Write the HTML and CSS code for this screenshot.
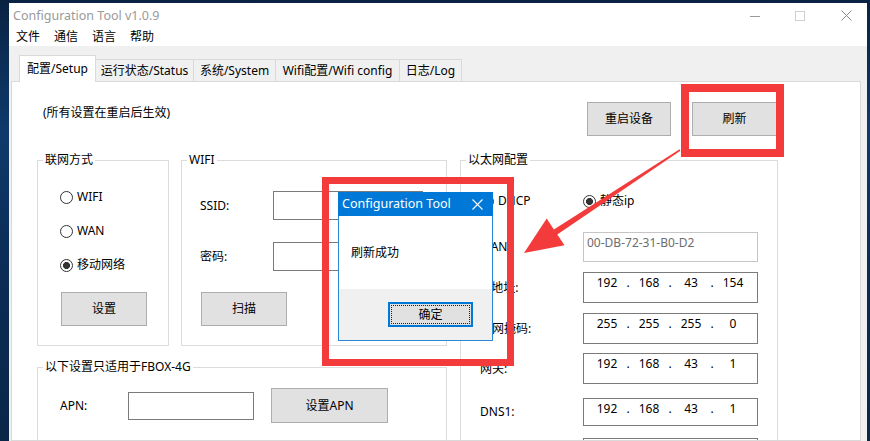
FILE: index.html
```html
<!DOCTYPE html>
<html lang="zh-CN">
<head>
<meta charset="utf-8">
<title>Configuration Tool v1.0.9</title>
<link rel="stylesheet" href="styles.css">
</head>
<body>
<div class="desktop">
  <div class="window">
    <div class="titlebar">
      <span class="title">Configuration Tool v1.0.9</span>
      <div class="controls">
        <span class="ctl ctl-min"><svg width="10" height="10" viewBox="0 0 10 10"><path d="M0 5.5H10" stroke="#9a9a9a" stroke-width="1"/></svg></span>
        <span class="ctl ctl-max"><svg width="10" height="10" viewBox="0 0 10 10"><rect x="0.5" y="0.5" width="9" height="9" fill="none" stroke="#d0d0d0" stroke-width="1"/></svg></span>
        <span class="ctl ctl-close"><svg width="11" height="11" viewBox="0 0 11 11"><path d="M0.5 0.5L10.5 10.5M10.5 0.5L0.5 10.5" stroke="#8a8a8a" stroke-width="1"/></svg></span>
      </div>
    </div>
    <div class="menubar">
      <span class="menu-item">文件</span>
      <span class="menu-item">通信</span>
      <span class="menu-item">语言</span>
      <span class="menu-item">帮助</span>
    </div>
    <div class="client">
      <div class="tabs">
        <div class="tab tab-active tab-setup">配置/Setup</div>
        <div class="tab tab-status">运行状态/Status</div>
        <div class="tab tab-system">系统/System</div>
        <div class="tab tab-wifi">Wifi配置/Wifi config</div>
        <div class="tab tab-log">日志/Log</div>
      </div>
      <div class="tab-panel">
        <div class="panel-header">
          <p class="note">(所有设置在重启后生效)</p>
          <div class="header-actions">
            <button class="btn btn-restart">重启设备</button>
            <button class="btn btn-refresh">刷新</button>
          </div>
        </div>
        <div class="panel-body">
          <div class="left-col">
            <div class="group-row">
              <fieldset class="group group-net">
                <legend>联网方式</legend>
                <div class="group-inner net-inner">
                  <div class="radio"><span class="radio-dot"></span><span>WIFI</span></div>
                  <div class="radio"><span class="radio-dot"></span><span>WAN</span></div>
                  <div class="radio"><span class="radio-dot checked"></span><span>移动网络</span></div>
                  <button class="btn btn-set">设置</button>
                </div>
              </fieldset>
              <fieldset class="group group-wifi">
                <legend>WIFI</legend>
                <div class="group-inner wifi-inner">
                  <div class="form-row wifi-row">
                    <span class="wifi-label">SSID:</span>
                    <span class="textbox wifi-box"></span>
                  </div>
                  <div class="form-row wifi-row wifi-row-pass">
                    <span class="wifi-label">密码:</span>
                    <span class="textbox wifi-box"></span>
                  </div>
                  <button class="btn btn-scan">扫描</button>
                </div>
              </fieldset>
            </div>
            <fieldset class="group group-fbox">
              <legend>以下设置只适用于FBOX-4G</legend>
              <div class="group-inner fbox-inner">
                <div class="form-row apn-row">
                  <span class="apn-label">APN:</span>
                  <span class="textbox apn-box"></span>
                  <button class="btn btn-apn">设置APN</button>
                </div>
              </div>
            </fieldset>
          </div>
          <fieldset class="group group-eth">
            <legend>以太网配置</legend>
            <div class="group-inner eth-inner">
              <div class="eth-radios">
                <div class="radio radio-dhcp"><span class="radio-dot"></span><span>DHCP</span></div>
                <div class="radio"><span class="radio-dot checked"></span><span>静态ip</span></div>
              </div>
              <div class="eth-row row-mac">
                <span class="eth-label">WAN:</span>
                <span class="textbox mac-box">00-DB-72-31-B0-D2</span>
              </div>
              <div class="eth-row row-ip">
                <span class="eth-label">IP地址:</span>
                <span class="textbox ip-box"><span class="seg">192</span><span class="dot">.</span><span class="seg">168</span><span class="dot">.</span><span class="seg">43</span><span class="dot">.</span><span class="seg">154</span></span>
              </div>
              <div class="eth-row row-mask">
                <span class="eth-label">子网掩码:</span>
                <span class="textbox ip-box"><span class="seg">255</span><span class="dot">.</span><span class="seg">255</span><span class="dot">.</span><span class="seg">255</span><span class="dot">.</span><span class="seg">0</span></span>
              </div>
              <div class="eth-row row-gw">
                <span class="eth-label">网关:</span>
                <span class="textbox ip-box"><span class="seg">192</span><span class="dot">.</span><span class="seg">168</span><span class="dot">.</span><span class="seg">43</span><span class="dot">.</span><span class="seg">1</span></span>
              </div>
              <div class="eth-row row-dns1">
                <span class="eth-label">DNS1:</span>
                <span class="textbox ip-box"><span class="seg">192</span><span class="dot">.</span><span class="seg">168</span><span class="dot">.</span><span class="seg">43</span><span class="dot">.</span><span class="seg">1</span></span>
              </div>
              <div class="eth-row row-dns2">
                <span class="eth-label"></span>
                <span class="textbox ip-box"></span>
              </div>
            </div>
          </fieldset>
        </div>
      </div>
    </div>
  </div>
</div>

<div class="dialog">
  <div class="dialog-title">
    <span>Configuration Tool</span>
    <svg class="dialog-close" width="11" height="11" viewBox="0 0 11 11"><path d="M0.5 0.5L10.5 10.5M10.5 0.5L0.5 10.5" stroke="#fff" stroke-width="1.1"/></svg>
  </div>
  <div class="dialog-body">刷新成功</div>
  <div class="dialog-footer">
    <button class="btn btn-ok">确定</button>
  </div>
</div>

<svg class="annotations" width="870" height="441" viewBox="0 0 870 441">
  <rect x="325.5" y="180.5" width="185" height="182" fill="none" stroke="#f33b3b" stroke-width="7"/>
  <rect x="685" y="88" width="95" height="65" fill="none" stroke="#f33b3b" stroke-width="8"/>
  <polygon points="524,253 546.7,218.6 553.9,229.4 679.6,149.3 680.4,150.7 557.3,234.4 564.5,245.2" fill="#f33b3b"/>
</svg>
</body>
</html>
```

FILE: styles.css
```css
* { box-sizing: border-box; }
html, body { margin: 0; padding: 0; }
body {
  width: 870px;
  height: 441px;
  overflow: hidden;
  position: relative;
  background: linear-gradient(180deg, #0a2343 0%, #0e3a6b 30%, #0b2c55 60%, #0a2748 100%);
  font-family: "Noto Sans", "Noto Sans CJK SC", sans-serif;
  font-size: 12px;
  line-height: 16px;
  color: #000;
}
.desktop { padding: 3px 3px 0 9px; height: 441px; }
.window {
  background: #f0f0f0;
  height: 438px;
  overflow: hidden;
  display: flex;
  flex-direction: column;
}
.titlebar { height: 25px; background: #fff; display: flex; align-items: center; flex: none; }
.title { padding-left: 4px; color: #9a9a9a; font-size: 12.5px; }
.controls { margin-left: auto; display: flex; height: 100%; }
.ctl { display: flex; align-items: center; justify-content: center; height: 100%; }
.ctl svg { display: block; }
.ctl-min { width: 40px; }
.ctl-max { width: 50px; }
.ctl-close { width: 42px; }

.menubar { height: 18px; background: #fff; display: flex; align-items: center; flex: none; }
.menu-item { padding: 0 7px; }

.client { padding: 9px 6px 0 2px; flex: 1; display: flex; flex-direction: column; min-height: 0; }
.tabs { display: flex; align-items: flex-end; height: 26px; padding-left: 8px; flex: none; }
.tab {
  height: 22px;
  border: 1px solid #d9d9d9;
  border-bottom: none;
  background: #f0f0f0;
  text-align: center;
  line-height: 21px;
  white-space: nowrap;
  margin-left: -1px;
}
.tab-active {
  height: 27px;
  background: #fff;
  margin-bottom: -1px;
  margin-left: 0;
  position: relative;
  z-index: 1;
  padding-top: 2px;
  line-height: 22px;
}
.tab-setup { width: 77px; }
.tab-status { width: 99px; }
.tab-system { width: 83px; }
.tab-wifi { width: 125px; }
.tab-log { width: 63px; }

.tab-panel {
  background: #fff;
  border: 1px solid #d9d9d9;
  flex: 1;
  min-height: 0;
  overflow: hidden;
  padding-left: 25px;
}

.panel-header {
  width: 741px;
  height: 70px;
  padding-top: 20px;
  display: flex;
  justify-content: space-between;
  align-items: flex-start;
}
.note { margin: 3px 0 0 6px; }
.header-actions { display: flex; gap: 21px; margin-right: 1px; }

.btn {
  font: inherit;
  color: #000;
  background: #e1e1e1;
  border: 1px solid #adadad;
  padding: 0;
  margin: 0;
  display: block;
}
.btn-restart { width: 84px; height: 34px; }
.btn-refresh { width: 85px; height: 34px; }

.panel-body {
  display: grid;
  grid-template-columns: 410px 318px;
  column-gap: 13px;
  align-items: start;
}

.group {
  margin: 0;
  padding: 0;
  border: 1px solid #dcdcdc;
  min-width: 0;
}
.group legend {
  margin-left: 5px;
  padding: 0 2px;
  line-height: 16px;
}
.group-row { display: flex; gap: 12px; }
.group-net { width: 132px; height: 194px; }
.group-wifi { width: 266px; height: 194px; }
.group-fbox { width: 410px; height: 120px; margin-top: 13px; }
.group-eth { width: 318px; height: 320px; }

.net-inner { padding: 21px 0 0 22px; }
.radio { display: flex; align-items: center; height: 16px; gap: 4px; white-space: nowrap; }
.net-inner .radio { margin-bottom: 18px; }
.radio-dot {
  width: 13px;
  height: 13px;
  border: 1px solid #333;
  border-radius: 50%;
  background: #fff;
  flex: none;
}
.radio-dot.checked { background: radial-gradient(circle, #333 0 3.2px, #fff 3.8px); }
.btn-set { width: 86px; height: 34px; margin: 19px 0 0 1px; }

.wifi-inner { padding: 23px 0 0 18px; }
.form-row { display: flex; align-items: center; }
.wifi-row { height: 29px; }
.wifi-row-pass { margin-top: 22px; }
.wifi-label { width: 73px; }
.textbox {
  display: block;
  background: #fff;
  border: 1px solid #7a7a7a;
}
.wifi-box { width: 150px; height: 29px; }
.btn-scan { width: 86px; height: 34px; margin: 21px 0 0 1px; }

.fbox-inner { padding: 13px 0 0 22px; }
.apn-row { height: 35px; }
.apn-label { width: 68px; }
.apn-box { width: 126px; height: 28px; }
.btn-apn { width: 117px; height: 35px; margin-left: 17px; }

.eth-inner { padding: 25px 0 0 19px; }
.eth-radios { display: flex; height: 16px; }
.radio-dhcp { width: 102px; margin-left: 1px; }
.eth-row { display: flex; align-items: center; }
.eth-label { width: 103px; white-space: nowrap; flex: none; }
.row-mac { margin-top: 23px; height: 30px; }
.row-ip { margin-top: 10px; height: 31px; }
.row-mask { margin-top: 10px; height: 31px; }
.row-gw { margin-top: 9px; height: 31px; }
.row-dns1 { margin-top: 14px; height: 28px; }
.row-dns2 { margin-top: 12px; height: 30px; }
.eth-row .textbox { width: 175px; height: 100%; }
.mac-box {
  border-color: #c6c6c6 !important;
  color: #6d6d6d;
  padding: 2px 0 0 3px;
  white-space: nowrap;
}
.ip-box { display: flex !important; padding: 2px 0 0 6px; }
.seg { width: 34px; text-align: center; }
.dot { width: 8px; text-align: center; }

.dialog {
  position: absolute;
  left: 338px;
  top: 192px;
  width: 155px;
  height: 149px;
  border: 1px solid #2a87d6;
  background: #fff;
  display: flex;
  flex-direction: column;
}
.dialog-title {
  margin: -1px -1px 0;
  height: 24px;
  background: #0078d7;
  color: #fff;
  display: flex;
  align-items: center;
  padding-left: 4px;
  font-size: 12.5px;
}
.dialog-close { margin-left: auto; margin-right: 10px; display: block; }
.dialog-body { height: 73px; padding: 29px 0 0 12px; }
.dialog-footer {
  flex: 1;
  background: #f0f0f0;
  display: flex;
  justify-content: flex-end;
  align-items: center;
  padding-right: 19px;
}
.btn-ok {
  width: 85px;
  height: 25px;
  border: 2px solid #0078d7;
  position: relative;
}
.btn-ok::after {
  content: "";
  position: absolute;
  inset: 1px;
  border: 1px dotted #222;
}

.annotations {
  position: absolute;
  left: 0;
  top: 0;
  pointer-events: none;
}
```
